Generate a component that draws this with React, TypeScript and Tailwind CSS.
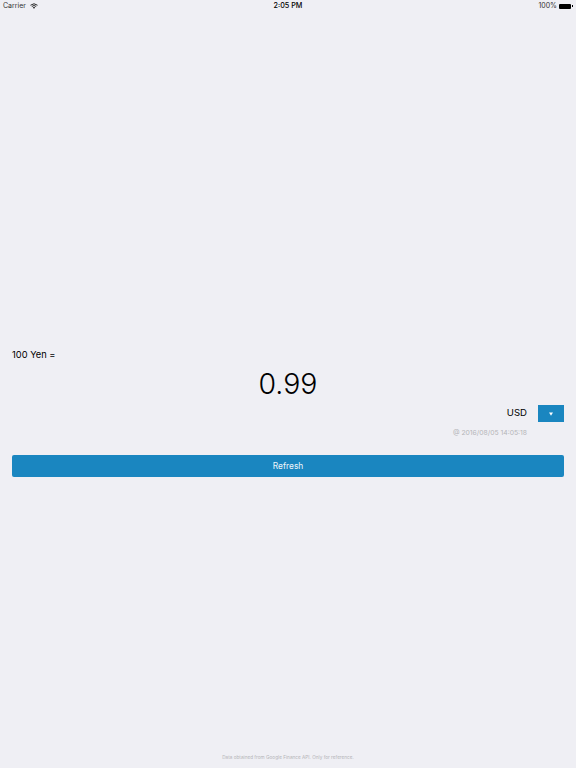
export default function App() {
  return (
    <div className="w-[576px] h-[768px] bg-[#efeff4] flex flex-col overflow-hidden text-black font-['Inter',sans-serif]">
      <div className="h-3 pl-[3px] pr-[3px] flex items-center justify-between text-[7px] leading-3 relative">
        <div className="flex items-center gap-[4px] text-[#333]">
          <span>Carrier</span>
          <svg width="8" height="6" viewBox="0 0 16 12" fill="none" stroke="#111" strokeWidth="1.8">
            <path d="M1 4.5 Q8 -1.5 15 4.5" />
            <path d="M3.6 7 Q8 3 12.4 7" />
            <path d="M8 11.5 L5.6 9 Q8 7 10.4 9 Z" fill="#111" stroke="none" />
          </svg>
        </div>
        <span className="absolute left-0 right-0 text-center font-medium text-[7.2px]">2:05 PM</span>
        <div className="flex items-center gap-[1px]">
          <span className="text-[#333]">100%</span>
          <div className="ml-[1px] w-[12px] h-[5px] bg-black rounded-[1px]" />
          <div className="w-[1px] h-[2px] bg-black" />
        </div>
      </div>
      <div className="h-[335px]" />
      <div className="px-3 text-[9.3px] leading-4 text-black">100 Yen =</div>
      <div className="text-center text-[28.5px] leading-[42px] font-light">0.99</div>
      <div className="pr-3 flex items-center justify-end h-[17px]">
        <span className="text-[9.6px] mr-[11px] text-black">USD</span>
        <div className="w-[26px] h-[17px] bg-[#1a86c0] flex items-center justify-center">
          <svg width="4" height="4" viewBox="0 0 4 4"><path d="M0 0.4 H4 L2 3.8 Z" fill="#fff" /></svg>
        </div>
      </div>
      <div className="mt-[5px] pr-[49px] text-right text-[6.8px] leading-3 text-[#b5b5b8]">@ 2016/08/05 14:05:18</div>
      <div className="mt-[16px] mx-3 h-[22px] rounded-[2px] bg-[#1a86c0] text-[#eef6fb] text-[8.4px] flex items-center justify-center">Refresh</div>
      <div className="flex-1" />
      <div className="pb-2 text-center text-[4.7px] leading-[6px] text-[#b5b5b8]">Data obtained from Google Finance API. Only for reference.</div>
    </div>
  );
}
